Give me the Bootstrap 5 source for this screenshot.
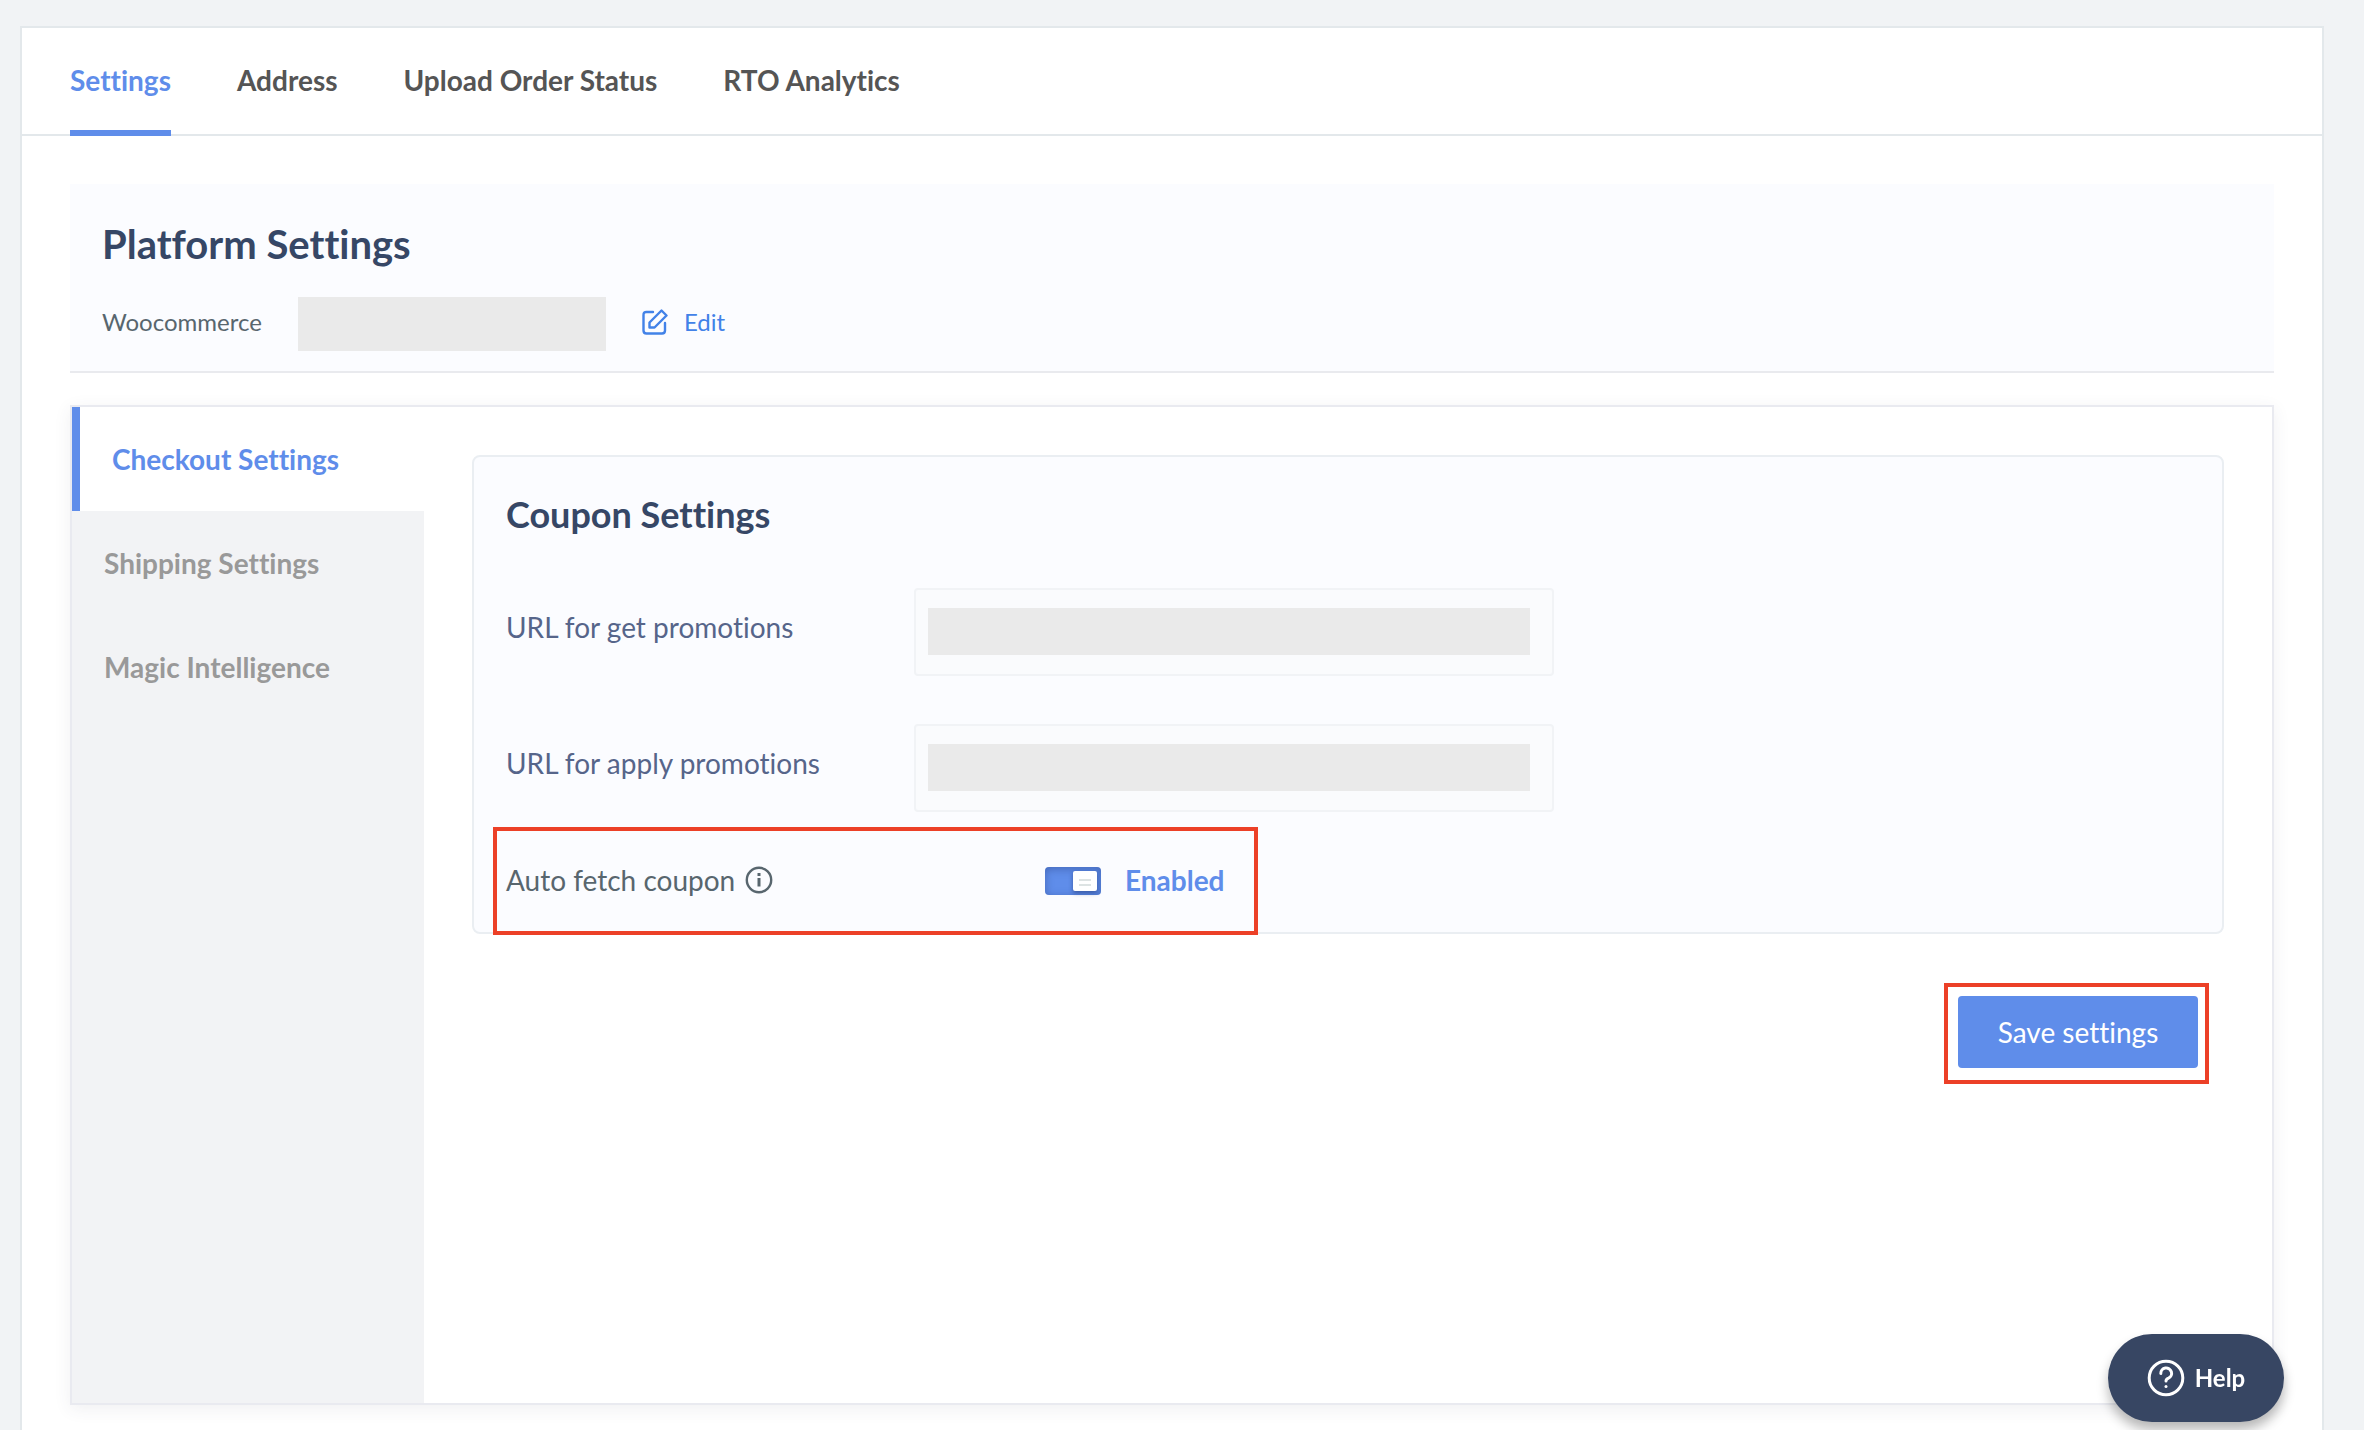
<!DOCTYPE html>
<html lang="en">
<head>
<meta charset="utf-8">
<meta name="viewport" content="width=device-width, initial-scale=1">
<title>Platform Settings</title>
<link href="https://cdn.jsdelivr.net/npm/bootstrap@5.3.0/dist/css/bootstrap.min.css" rel="stylesheet">
<style>
  :root { --brand: #5f8dea; --ink: #364766; --line: #e3e8eb; --tint: #fbfcff; --mask: #eaeaea; --mark: #ec4027; }
  body { font-family: Lato, "Liberation Sans", sans-serif; font-variant-ligatures: none; font-size: 28px; line-height: 40px; color: #58666e; background: #f1f3f5; }
  button { font-variant-ligatures: none; }
  .page { padding: 26px 40px 0 20px; }
  .panel { background: #fff; border: 2px solid var(--line); border-bottom: 0; }
  .top-tabs { gap: 66px; padding: 0 48px; border-bottom: 2px solid var(--line); }
  .top-tabs .nav-link { padding: 32px 0 30px; margin-bottom: -2px; border-bottom: 6px solid transparent; font-weight: 700; color: #555; }
  .top-tabs .nav-link.active { color: var(--brand); border-color: var(--brand); }
  .panel-content { padding: 48px 48px 25px; gap: 32px; }
  .platform { background: var(--tint); border-bottom: 2px solid #e9eaee; padding: 32px 32px 20px; }
  .platform h1 { font-size: 40px; line-height: 56px; font-weight: 700; color: var(--ink); margin-bottom: 25px; }
  .platform-row { font-size: 24px; gap: 36px; }
  .platform-row label, .edit-link { padding-bottom: 4px; }
  .platform-value { width: 308px; height: 54px; border: 0; background: var(--mask); }
  .edit-link { color: #4282e8; text-decoration: none; gap: 16px; }
  .workspace { border: 2px solid #e9eaf0; box-shadow: 0 4px 16px rgba(60, 60, 90, .08); }
  .side-nav { width: 352px; background: #f2f3f5; }
  .side-nav .nav-link { padding: 32px; font-weight: 700; color: #999; }
  .side-nav .nav-link.active { color: var(--brand); background: #fff; border-left: 8px solid var(--brand); }
  .workspace-body { padding: 48px; }
  .coupon { background: var(--tint); border: 2px solid #eaeef2; border-radius: 8px; padding: 32px; }
  .coupon h2 { font-size: 36px; line-height: 50px; font-weight: 700; color: var(--ink); margin-bottom: 49px; }
  .url-row { margin-bottom: 48px; }
  .url-row label { width: 408px; padding-top: 19px; color: #56658a; }
  .url-input { width: 640px; height: 88px; border: 2px solid #f1f3f6; border-radius: 4px; background: linear-gradient(var(--mask), var(--mask)) 12px 18px / 602px 47px no-repeat #fafbfd; }
  .fetch-name { width: 539px; gap: 10px; }
  .toggle { appearance: none; position: relative; width: 56px; height: 28px; margin: 2px 24px 0 0; border-radius: 4px; background: var(--brand); box-shadow: inset 0 2px 8px rgba(30, 50, 110, .4); }
  .toggle::before { content: ""; position: absolute; top: 4px; right: 4px; width: 24px; height: 20px; border-radius: 2px; box-shadow: 0 2px 4px rgba(20, 40, 100, .5);
    background: linear-gradient(#dde3e3, #dde3e3) 6px 8px / 12px 2px no-repeat, linear-gradient(#dde3e3, #dde3e3) 6px 13px / 12px 2px no-repeat #fff; }
  .toggle:not(:checked) { background: #bbb; }
  .toggle:not(:checked)::before { right: 28px; }
  .enabled-text { color: var(--brand); font-weight: 700; }
  .callout { position: absolute; border: 4px solid var(--mark); pointer-events: none; }
  .callout-fetch { left: -13px; right: 0; top: -33px; bottom: -35px; }
  .fetch-wrap { width: 752px; }
  .save-zone { margin: 62px 26px 0 0; }
  .save-btn { width: 240px; height: 72px; border: 0; border-radius: 4px; background: var(--brand); color: #fff; }
  .callout-save { left: -14px; right: -11px; top: -13px; bottom: -16px; }
  .help-btn { position: fixed; right: 80px; bottom: 8px; width: 176px; height: 88px; gap: 10px; border: 0; border-radius: 44px; background: #374663; color: #fff; font-size: 24px; font-weight: 700; box-shadow: 0 8px 12px rgba(0, 0, 0, .28); }
</style>
</head>
<body>
<div class="page min-vh-100 d-flex flex-column">
  <div class="panel flex-grow-1 d-flex flex-column">
    <nav class="top-tabs nav" aria-label="Sections">
      <a class="nav-link active" aria-current="page" href="#">Settings</a>
      <a class="nav-link" href="#">Address</a>
      <a class="nav-link" href="#">Upload Order Status</a>
      <a class="nav-link" href="#">RTO Analytics</a>
    </nav>
    <main class="panel-content flex-grow-1 d-flex flex-column">
      <section class="platform">
        <h1>Platform Settings</h1>
        <div class="platform-row d-flex align-items-center">
          <label for="store">Woocommerce</label>
          <input class="platform-value" id="store" type="text" readonly>
          <a class="edit-link d-flex align-items-center" href="#">
            <svg width="26" height="26" viewBox="0 0 26 26" fill="none" stroke="currentColor" stroke-width="2.400" stroke-linejoin="round" stroke-linecap="round" aria-hidden="true"><path d="M11 3H4.500Q1.500 3 1.500 6V21.500Q1.500 24.500 4.500 24.500H20Q23 24.500 23 21.500V14"/><path d="M7.500 13.500 19.500 1.500 24.500 6.500 12.500 18.500H7.500Z"/></svg>
            Edit</a>
        </div>
      </section>
      <section class="workspace flex-grow-1 d-flex">
        <nav class="side-nav nav flex-column flex-shrink-0" aria-label="Settings groups">
          <a class="nav-link active" href="#">Checkout Settings</a>
          <a class="nav-link" href="#">Shipping Settings</a>
          <a class="nav-link" href="#">Magic Intelligence</a>
        </nav>
        <form class="workspace-body flex-grow-1">
          <div class="coupon">
            <h2>Coupon Settings</h2>
            <div class="url-row d-flex">
              <label for="get-url">URL for get promotions</label>
              <input class="url-input" id="get-url" type="text">
            </div>
            <div class="url-row d-flex">
              <label for="apply-url">URL for apply promotions</label>
              <input class="url-input" id="apply-url" type="text">
            </div>
            <div class="fetch-wrap position-relative">
              <div class="fetch-row d-flex align-items-center">
                <div class="fetch-name d-flex align-items-center">
                  <label for="auto-fetch">Auto fetch coupon</label>
                  <svg width="28" height="28" viewBox="0 0 28 28" fill="none" stroke="currentColor" stroke-width="2.400" aria-hidden="true"><circle cx="14" cy="14" r="12.200"/><path stroke-width="3" d="M14 12V20.500M14 7V10"/></svg>
                </div>
                <input class="toggle" id="auto-fetch" type="checkbox" role="switch" checked>
                <span class="enabled-text">Enabled</span>
              </div>
              <div class="callout callout-fetch"></div>
            </div>
          </div>
          <div class="save-zone d-flex justify-content-end">
            <div class="position-relative">
              <button class="save-btn" type="submit">Save settings</button>
              <div class="callout callout-save"></div>
            </div>
          </div>
        </form>
      </section>
    </main>
  </div>
</div>
<button class="help-btn d-flex align-items-center justify-content-center" type="button">
  <svg width="38" height="38" viewBox="0 0 38 38" fill="none" stroke="currentColor" stroke-width="3" stroke-linecap="round" stroke-linejoin="round" aria-hidden="true"><circle cx="19" cy="19" r="16.800"/><path d="M13.800 14.500A5.400 5.400 0 1 1 21.500 19.200Q19 20.200 19 22"/><path d="M19 27.500V27.600"/></svg>
  Help</button>
<script src="https://cdn.jsdelivr.net/npm/bootstrap@5.3.0/dist/js/bootstrap.bundle.min.js"></script>
</body>
</html>
